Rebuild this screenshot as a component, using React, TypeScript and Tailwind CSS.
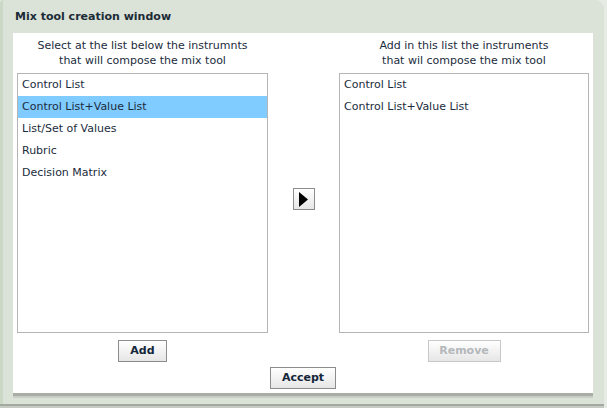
import React from "react";

const leftItems = ["Control List", "Control List+Value List", "List/Set of Values", "Rubric", "Decision Matrix"];
const rightItems = ["Control List", "Control List+Value List"];

function ListBox({ items, selected }: { items: string[]; selected?: number }) {
  return (
    <div className="h-[260px] border border-[#b5b5b5] bg-white">
      {items.map((it, i) => (
        <div
          key={it}
          className={`h-[22px] leading-[22px] pl-[4px] text-[11px] text-[#1b2c3d] ${i === selected ? "bg-[#80cbff]" : ""}`}
        >
          {it}
        </div>
      ))}
    </div>
  );
}

function Btn({ children, w, disabled }: { children: React.ReactNode; w: string; disabled?: boolean }) {
  return (
    <div
      className={`${w} h-[22px] flex items-center justify-center border text-[11px] font-bold bg-gradient-to-b from-white to-[#e6e6e6] ${
        disabled ? "border-[#c8c8c8] text-[#b4b8bb]" : "border-[#8c8c8c] text-[#13263a]"
      }`}
    >
      {children}
    </div>
  );
}

export default function App() {
  return (
    <div className="w-[607px] h-[408px] bg-[#e6ebe4] font-['DejaVu_Sans',sans-serif]">
      <div className="w-[604px] h-[404px] bg-[#dbe2d8] rounded-tr-[9px] rounded-tl-[3px] border-l-[3px] border-[#cbd8c6] shadow-[0_2px_0_#a3a9a0,0_4px_0_#c6ccc3] flex flex-col">
        <div className="h-[33px] pl-[12px] pt-[10px] text-[11px] font-bold text-[#1c2b36] leading-[14px]">
          Mix tool creation window
        </div>
        <div className="ml-[10px] w-[580px] h-[360px] bg-white shadow-[0_3px_0_#a9ada6,0_5px_0_#c8cec5] pt-[5px] pl-[4px] pr-[4px] flex flex-col">
          <div className="flex">
            <div className="w-[251px] flex flex-col">
              <div className="h-[30px] text-center text-[11px] leading-[15px] text-[#1b2c3d]">
                Select at the list below the instrumnts
                <br />
                that will compose the mix tool
              </div>
              <div className="mt-[5px]">
                <ListBox items={leftItems} selected={1} />
              </div>
              <div className="mt-[7px] flex justify-center">
                <Btn w="w-[49px]">Add</Btn>
              </div>
            </div>
            <div className="w-[71px] flex items-start justify-center pt-[150px]">
              <div className="w-[22px] h-[22px] border border-[#8c8c8c] bg-gradient-to-b from-white to-[#e6e6e6] flex items-center justify-center">
                <svg width="9" height="15" viewBox="0 0 9 15">
                  <polygon points="0,0 9,7.5 0,15" fill="#000" />
                </svg>
              </div>
            </div>
            <div className="w-[250px] flex flex-col">
              <div className="h-[30px] text-center text-[11px] leading-[15px] text-[#1b2c3d]">
                Add in this list the instruments
                <br />
                that wil compose the mix tool
              </div>
              <div className="mt-[5px]">
                <ListBox items={rightItems} />
              </div>
              <div className="mt-[7px] flex justify-center">
                <Btn w="w-[73px]" disabled>
                  Remove
                </Btn>
              </div>
            </div>
          </div>
          <div className="mt-[5px] flex justify-center">
            <Btn w="w-[66px]">Accept</Btn>
          </div>
        </div>
      </div>
    </div>
  );
}
